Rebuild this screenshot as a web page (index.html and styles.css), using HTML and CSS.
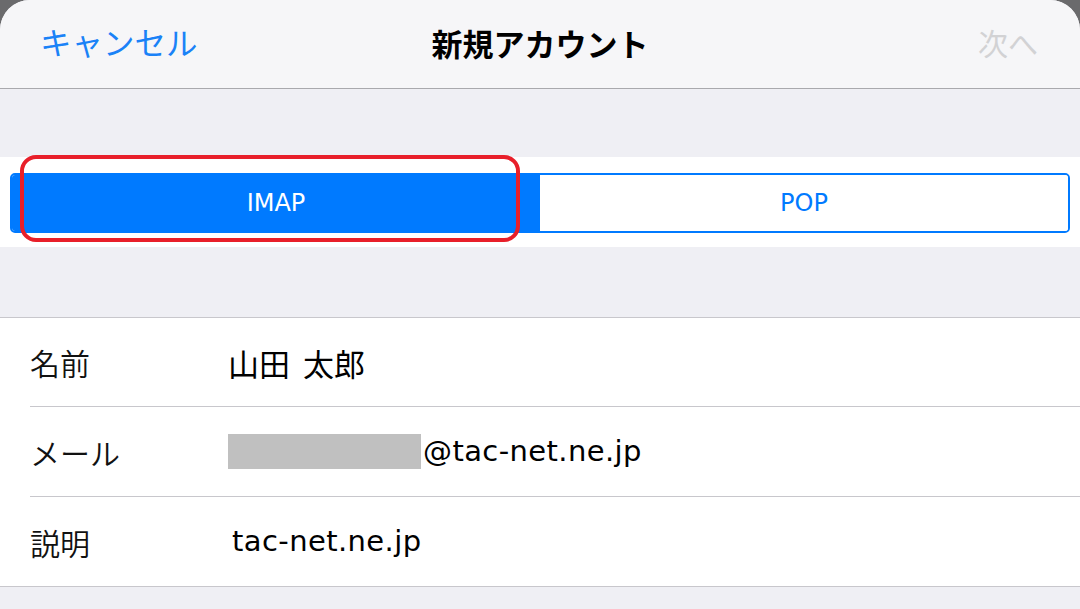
FILE: index.html
```html
<!DOCTYPE html>
<html lang="ja">
<head>
<meta charset="utf-8">
<title>新規アカウント</title>
<link rel="stylesheet" href="styles.css">
</head>
<body>
<div class="sheet">
  <header class="nav">
    <span class="nav-cancel">キャンセル</span>
    <h1 class="nav-title">新規アカウント</h1>
    <span class="nav-next">次へ</span>
  </header>
  <div class="spacer spacer-top"></div>
  <section class="seg-wrap">
    <div class="seg">
      <div class="seg-item seg-active">IMAP</div>
      <div class="seg-item">POP</div>
    </div>
    <div class="highlight"></div>
  </section>
  <div class="spacer spacer-mid"></div>
  <ul class="list">
    <li class="row row-first">
      <span class="row-label">名前</span>
      <span class="row-value row-value-name">山田 太郎</span>
    </li>
    <li class="row">
      <span class="row-label">メール</span>
      <span class="row-value"><span class="redact"></span>@tac-net.ne.jp</span>
    </li>
    <li class="row row-last">
      <span class="row-label">説明</span>
      <span class="row-value row-value-desc">tac-net.ne.jp</span>
    </li>
  </ul>
</div>
</body>
</html>
```

FILE: styles.css
```css
html, body {
  margin: 0;
  padding: 0;
}
body {
  width: 1080px;
  height: 609px;
  overflow: hidden;
  background: #6a6a6c;
  font-family: "Noto Sans CJK JP", "Noto Sans", sans-serif;
}
.sheet {
  height: 609px;
  background: #efeff4;
  border-radius: 30px 30px 0 0;
  overflow: hidden;
}
.nav {
  height: 88px;
  padding-bottom: 4px;
  box-sizing: border-box;
  background: #f6f6f8;
  display: grid;
  grid-template-columns: 1fr auto 1fr;
  align-items: center;
}
.nav-cancel {
  justify-self: start;
  padding-left: 40px;
  font-size: 31.5px;
  line-height: 1;
  color: #1a82f7;
}
.nav-title {
  margin: 0;
  font-size: 31px;
  line-height: 1;
  font-weight: 700;
  color: #000;
}
.nav-next {
  justify-self: end;
  padding-right: 42px;
  font-size: 30px;
  line-height: 1;
  color: #d2d2d4;
}
.spacer-top {
  height: 68px;
  border-top: 1px solid #a9a9ad;
}
.seg-wrap {
  position: relative;
  background: #fff;
  height: 90px;
  padding: 16px 10px 0;
  box-sizing: border-box;
}
.seg {
  display: flex;
  height: 60px;
  border: 2px solid #007aff;
  border-radius: 5px;
  overflow: hidden;
  box-sizing: border-box;
}
.seg-item {
  flex: 1;
  display: flex;
  align-items: center;
  justify-content: center;
  font-family: "DejaVu Sans", "Noto Sans CJK JP", sans-serif;
  font-size: 24px;
  color: #007aff;
  background: #fff;
}
.seg-active {
  background: #007aff;
  color: #fff;
}
.highlight {
  position: absolute;
  left: 20px;
  top: -2px;
  width: 500px;
  height: 87px;
  border: 4px solid #e81f2a;
  border-radius: 16px;
  box-sizing: border-box;
}
.spacer-mid {
  height: 71px;
  border-bottom: 1px solid #c8c7cc;
  box-sizing: border-box;
}
.list {
  list-style: none;
  margin: 0;
  padding: 0 0 0 30px;
  background: #fff;
  border-bottom: 1px solid #c8c7cc;
}
.row {
  display: flex;
  align-items: center;
  height: 90px;
  border-bottom: 1px solid #c8c7cc;
  box-sizing: border-box;
}
.row-first {
  height: 89px;
}
.row-last {
  border-bottom: none;
  height: 89px;
}
.row-label {
  width: 198px;
  font-size: 30px;
  font-weight: 350;
  line-height: 1;
  color: #111;
}
.row-value {
  display: flex;
  align-items: center;
  font-family: "DejaVu Sans", "Noto Sans CJK JP", sans-serif;
  font-size: 29px;
  letter-spacing: 0.4px;
  line-height: 1;
  color: #000;
}
.row-value-name {
  font-family: "Noto Sans CJK JP", sans-serif;
  font-size: 31px;
  letter-spacing: 0;
  word-spacing: 6px;
}
.row-value-desc {
  padding-left: 4px;
}
.redact {
  display: inline-block;
  width: 193px;
  height: 35px;
  background: #c0c0c0;
  margin-right: 2px;
}
```
